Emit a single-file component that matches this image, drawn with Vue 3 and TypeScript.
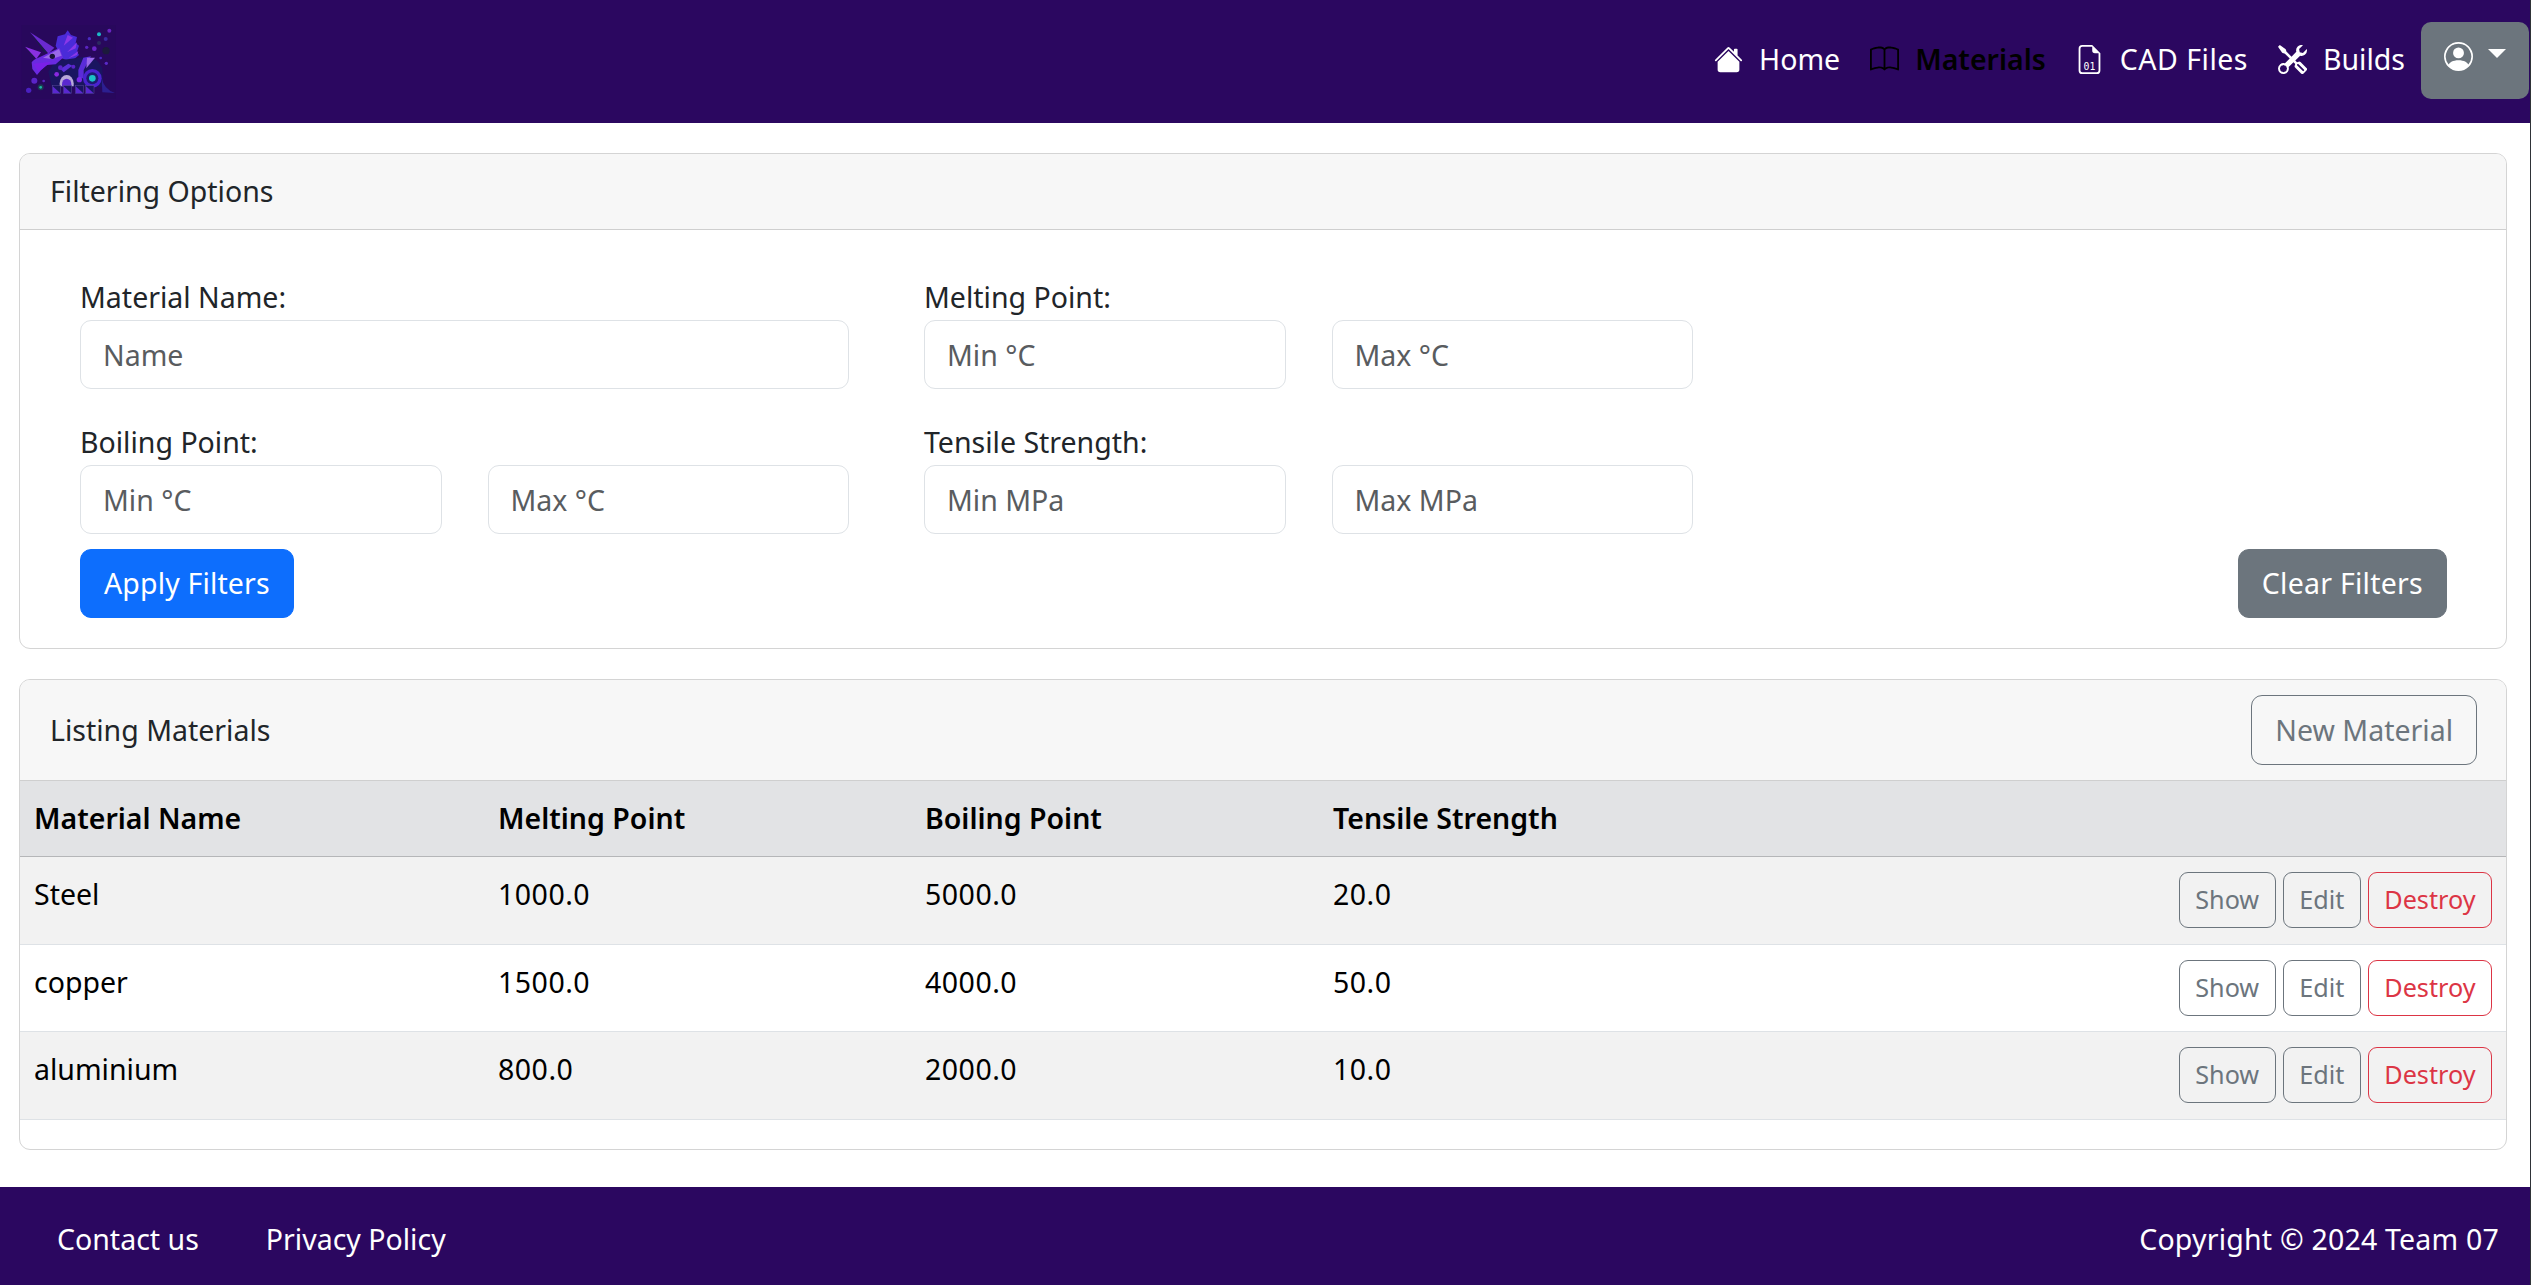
<script setup lang="ts">
interface Material { name: string; melting: string; boiling: string; tensile: string }
const materials: Material[] = [
  { name: 'Steel', melting: '1000.0', boiling: '5000.0', tensile: '20.0' },
  { name: 'copper', melting: '1500.0', boiling: '4000.0', tensile: '50.0' },
  { name: 'aluminium', melting: '800.0', boiling: '2000.0', tensile: '10.0' },
]
</script>

<template>
  <div class="page">
    <nav class="topbar">
      <svg class="logo" viewBox="0 0 330 270" width="110" height="90">
        <rect x="20" y="30" width="282" height="222" fill="#28085c" />
        <polygon points="45,52 118,98 100,116" fill="#6a2ad0" />
        <polygon points="45,52 100,116 86,110" fill="#1c1a4a" />
        <polygon points="30,95 78,112 64,132" fill="#8a30e0" />
        <polygon points="30,95 64,132 54,126" fill="#1c1a4a" />
        <path d="M122 92 L128 64 L150 58 L158 46 L168 60 L186 66 L182 84 L192 92 L186 110 L192 120 L168 140 L140 130 Z" fill="#4a2bd8" />
        <path d="M146 92 L158 60 L174 68 Z M156 112 L186 82 L182 100 Z M160 130 L190 108 L186 120 Z" fill="#8a38e8" />
        <path d="M100 170 L120 138 L190 128 Q245 118 262 160 L264 215 L110 215 Z" fill="#1a1560" />
        <path d="M190 165 L205 128 L228 124 L206 165 L206 190 L190 190 Z" fill="#5a2cd8" />
        <path d="M216 128 L240 128 L214 160 Z" fill="#9a68e8" />
        <path d="M136 162 L160 146 L172 152 L146 172 Z" fill="#5a2fd8" />
        <circle cx="175" cy="155" r="6" fill="#5a24c8" />
        <circle cx="136" cy="158" r="7" fill="#5a24c8" />
        <circle cx="125" cy="178" r="7" fill="#8a28e0" />
        <path d="M260 188 Q266 222 300 234 L262 232 Z" fill="#2c1f90" />
        <path d="M134 205 A21 25 0 0 1 176 205 L176 214 L134 214 Z" fill="#b8a8d8" />
        <path d="M141 208 A14 17 0 0 1 169 208 L169 214 L141 214 Z" fill="#5a28d0" />
        <circle cx="193" cy="194" r="8" fill="#7a28e8" />
        <circle cx="232" cy="190" r="28" fill="#4a22d0" />
        <circle cx="232" cy="190" r="18" fill="#1c1a70" />
        <circle cx="232" cy="190" r="10" fill="#1cc0c8" />
        <path d="M50 142 Q54 134 70 128 L134 98 L144 128 L122 148 L96 150 L78 166 L66 180 L52 162 Z" fill="#6a2ae0" />
        <path d="M84 128 L132 102 L140 122 L110 132 Z" fill="#9a68e8" />
        <path d="M54 146 L110 140 L96 150 L70 170 Z" fill="#7a20e8" />
        <circle cx="112" cy="124" r="8" fill="#1a1238" />
        <rect x="112" y="212" width="25" height="24" fill="#1a1560" stroke="#5a4a98" stroke-width="1.5" />
        <rect x="145" y="212" width="25" height="24" fill="#1a1560" stroke="#5a4a98" stroke-width="1.5" />
        <rect x="181" y="212" width="25" height="24" fill="#1a1560" stroke="#5a4a98" stroke-width="1.5" />
        <rect x="212" y="212" width="25" height="24" fill="#1a1560" stroke="#5a4a98" stroke-width="1.5" />
        <polygon points="113,235 136,235 113,214" fill="#5a28d0" />
        <polygon points="146,235 169,235 146,214" fill="#5a28d0" />
        <polygon points="182,235 205,235 182,214" fill="#5a28d0" />
        <polygon points="213,235 236,235 213,214" fill="#5a28d0" />
        <circle cx="252" cy="58" r="6" fill="#1cb8c8" />
        <circle cx="283" cy="47" r="6" fill="#6a24c0" />
        <circle cx="223" cy="71" r="5" fill="#4a2ac0" />
        <circle cx="272" cy="72" r="6" fill="#3a2aa0" />
        <circle cx="252" cy="84" r="6" fill="#2c2a60" />
        <circle cx="215" cy="97" r="5" fill="#5a24c0" />
        <circle cx="238" cy="101" r="7" fill="#6a24c8" />
        <circle cx="273" cy="107" r="11" fill="#1c1a3c" />
        <circle cx="257" cy="129" r="4" fill="#4a2ac0" />
        <circle cx="274" cy="145" r="5" fill="#5a2ac8" />
        <circle cx="58" cy="197" r="9" fill="#5a24c8" />
        <circle cx="86" cy="198" r="4" fill="#5a24c0" />
        <circle cx="77" cy="217" r="9" fill="#1c3a50" />
        <circle cx="77" cy="217" r="4" fill="#1cb8a8" />
        <circle cx="41" cy="226" r="8" fill="#4a20c0" />
      </svg>

      <div class="links">
        <a class="link home">
          <svg class="ico" viewBox="0 0 16 16" fill="currentColor"><path d="M8.707 1.5a1 1 0 0 0-1.414 0L.646 8.146a.5.5 0 0 0 .708.708L8 2.207l6.646 6.647a.5.5 0 0 0 .708-.708L13 5.793V2.5a.5.5 0 0 0-.5-.5h-1a.5.5 0 0 0-.5.5v1.293z"/><path d="m8 3.293 6 6V13.5a1.5 1.5 0 0 1-1.5 1.5h-9A1.5 1.5 0 0 1 2 13.5V9.293z"/></svg>
          <span>Home</span>
        </a>
        <a class="link active">
          <svg class="ico" viewBox="0 0 16 16" fill="currentColor"><path d="M1 2.828c.885-.37 2.154-.769 3.388-.893 1.33-.134 2.458.063 3.112.752v9.746c-.935-.53-2.12-.603-3.213-.493-1.18.12-2.37.461-3.287.811zm7.5-.141c.654-.689 1.782-.886 3.112-.752 1.234.124 2.503.523 3.388.893v9.923c-.918-.35-2.107-.692-3.287-.81-1.094-.111-2.278-.039-3.213.492zM8 1.783C7.015.936 5.587.81 4.287.94c-1.514.153-3.042.672-3.994 1.105A.5.5 0 0 0 0 2.5v11a.5.5 0 0 0 .707.455c.882-.4 2.303-.881 3.68-1.02 1.409-.142 2.59.087 3.223.877a.5.5 0 0 0 .78 0c.633-.79 1.814-1.019 3.222-.877 1.378.139 2.8.62 3.681 1.02A.5.5 0 0 0 16 13.5v-11a.5.5 0 0 0-.293-.455c-.952-.433-2.48-.952-3.994-1.105C10.413.809 8.985.936 8 1.783"/></svg>
          <span>Materials</span>
        </a>
        <a class="link">
          <svg class="ico" viewBox="0 0 16 16" fill="currentColor"><path d="M14 14V4.5L9.5 0H4a2 2 0 0 0-2 2v12a2 2 0 0 0 2 2h8a2 2 0 0 0 2-2M9.5 3A1.5 1.5 0 0 0 11 4.5h2V14a1 1 0 0 1-1 1H4a1 1 0 0 1-1-1V2a1 1 0 0 1 1-1h5.5z"/><text x="8" y="14" text-anchor="middle" font-size="5.4" font-family="'DejaVu Sans Mono', monospace" letter-spacing="0">01</text></svg>
          <span>CAD Files</span>
        </a>
        <a class="link">
          <svg class="ico" viewBox="0 0 16 16" fill="currentColor"><path d="M1 0 0 1l2.2 3.081a1 1 0 0 0 .815.419h.07a1 1 0 0 1 .708.293l2.675 2.675-2.617 2.654A3.003 3.003 0 0 0 0 13a3 3 0 1 0 5.878-.851l2.654-2.617.968.968-.305.914a1 1 0 0 0 .242 1.023l3.27 3.27a.997.997 0 0 0 1.414 0l1.586-1.586a.997.997 0 0 0 0-1.414l-3.27-3.27a1 1 0 0 0-1.023-.242L10.5 9.5l-.96-.96 2.68-2.643A3.005 3.005 0 0 0 16 3q0-.405-.102-.777l-2.14 2.141L12 4l-.364-1.757L13.777.102a3 3 0 0 0-3.675 3.68L7.462 6.46 4.793 3.793a1 1 0 0 1-.293-.707v-.071a1 1 0 0 0-.419-.814zm9.646 10.646a.5.5 0 0 1 .708 0l2.914 2.915a.5.5 0 0 1-.707.707l-2.915-2.914a.5.5 0 0 1 0-.708M3 11l.471.242.529.026.287.445.445.287.026.529L5 13l-.242.471-.026.529-.445.287-.287.445-.529.026L3 15l-.471-.242L2 14.732l-.287-.445L1.268 14l-.026-.529L1 13l.242-.471.026-.529.445-.287.287-.445.529-.026z"/></svg>
          <span>Builds</span>
        </a>
        <button class="user" type="button">
          <svg class="ico" viewBox="0 0 16 16" fill="currentColor"><path d="M11 6a3 3 0 1 1-6 0 3 3 0 0 1 6 0"/><path fill-rule="evenodd" d="M0 8a8 8 0 1 1 16 0A8 8 0 0 1 0 8m8-7a7 7 0 0 0-5.468 11.37C3.242 11.226 4.805 10 8 10s4.757 1.225 5.468 2.37A7 7 0 0 0 8 1"/></svg>
          <i class="caret"></i>
        </button>
      </div>
    </nav>

    <main class="content">
      <section class="card">
        <header class="card-head">Filtering Options</header>
        <div class="filter-body">
          <div class="filter-row">
            <div class="group">
              <label>Material Name:</label>
              <div class="one"><input placeholder="Name" /></div>
            </div>
            <div class="group">
              <label>Melting Point:</label>
              <div class="pair"><input placeholder="Min °C" /><input placeholder="Max °C" /></div>
            </div>
          </div>
          <div class="filter-row">
            <div class="group">
              <label>Boiling Point:</label>
              <div class="pair"><input placeholder="Min °C" /><input placeholder="Max °C" /></div>
            </div>
            <div class="group">
              <label>Tensile Strength:</label>
              <div class="pair"><input placeholder="Min MPa" /><input placeholder="Max MPa" /></div>
            </div>
          </div>
          <div class="actions">
            <button class="btn primary" type="button">Apply Filters</button>
            <button class="btn secondary" type="button">Clear Filters</button>
          </div>
        </div>
      </section>

      <section class="card listing">
        <header class="card-head split">
          <span>Listing Materials</span>
          <button class="btn outline" type="button">New Material</button>
        </header>
        <table>
          <colgroup>
            <col class="c1" /><col class="c2" /><col class="c3" /><col class="c4" /><col />
          </colgroup>
          <thead>
            <tr>
              <th>Material Name</th>
              <th>Melting Point</th>
              <th>Boiling Point</th>
              <th>Tensile Strength</th>
              <th></th>
            </tr>
          </thead>
          <tbody>
            <tr v-for="m in materials" :key="m.name">
              <td>{{ m.name }}</td>
              <td class="num">{{ m.melting }}</td>
              <td class="num">{{ m.boiling }}</td>
              <td class="num">{{ m.tensile }}</td>
              <td class="row-actions">
                <button class="mini" type="button">Show</button>
                <button class="mini" type="button">Edit</button>
                <button class="mini danger" type="button">Destroy</button>
              </td>
            </tr>
          </tbody>
        </table>
      </section>
    </main>

    <footer class="foot">
      <div class="foot-links">
        <a>Contact us</a>
        <a>Privacy Policy</a>
      </div>
      <span class="copy">Copyright © 2024 Team 07</span>
    </footer>
  </div>
</template>

<style>
html, body { background: #2f3338; }
body { margin: 0; }
</style>

<style scoped>
.page {
  width: 2530px;
  height: 1285px;
  background: #fff;
  color: #212529;
  font-family: "Noto Sans", "Open Sans", sans-serif;
  font-size: 28.5px;
  line-height: 43px;
  display: flex;
  flex-direction: column;
  overflow: hidden;
}
button, input { font: inherit; }

.topbar {
  height: 123px;
  flex: none;
  background: #2b0760;
  display: flex;
  align-items: flex-start;
  justify-content: space-between;
  padding-left: 15px;
}
.logo { margin-top: 15px; display: block; }
.links { display: flex; align-items: flex-start; padding-top: 22px; padding-right: 1px; }
.link {
  display: flex;
  align-items: center;
  color: #fff;
  height: 74px;
  gap: 16px;
  margin-right: 30px;
}
.ico { width: 29px; height: 29px; display: block; flex: none; }
.link.active { color: #000; font-weight: 600; margin-right: 29px; }
.link:nth-child(3) span { letter-spacing: 0.5px; }
.link:nth-child(4) { margin-right: 16px; }
.user {
  width: 108px;
  height: 77px;
  background: #6c757d;
  border: 0;
  border-radius: 10px;
  color: #fff;
  display: flex;
  align-items: flex-start;
  padding: 20px 0 0 23px;
  gap: 15px;
}
.caret {
  width: 0;
  height: 0;
  margin-top: 7px;
  border-left: 9px solid transparent;
  border-right: 9px solid transparent;
  border-top: 9px solid #fff;
}

.content { flex: 1; padding: 30px 23px 0 19px; }
.card {
  border: 1px solid #d4d4d4;
  border-radius: 11px;
  overflow: hidden;
  background: #fff;
}
.listing { margin-top: 30px; padding-bottom: 29px; }
.card-head {
  background: #f7f7f7;
  border-bottom: 1px solid #cfcfcf;
  padding: 16px 30px;
}
.card-head.split {
  display: flex;
  justify-content: space-between;
  align-items: center;
  padding: 15px 29px 15px 30px;
}

.filter-body {
  padding: 49px 59px 30px 60px;
  display: flex;
  flex-direction: column;
}
.filter-row {
  display: grid;
  grid-template-columns: 769px 769px;
  column-gap: 75px;
  margin-bottom: 35px;
}
.filter-row:nth-child(2) { margin-bottom: 15px; }
.group label { display: block; height: 41px; line-height: 37px; }
.filter-row:nth-child(2) .group label { line-height: 36px; }
.one, .pair { display: grid; }
.pair { grid-template-columns: 1fr 1fr; column-gap: 46px; }
input {
  box-sizing: border-box;
  width: 100%;
  height: 69px;
  padding: 0 22px;
  color: #212529;
  background: #fff;
  border: 1px solid #dee2e6;
  border-radius: 11px;
  outline: none;
}
input::placeholder { color: #595c5f; opacity: 1; }

.actions { display: flex; justify-content: space-between; }
.btn {
  box-sizing: border-box;
  height: 69px;
  padding: 0 23px;
  border-radius: 11px;
  border: 1px solid transparent;
  white-space: nowrap;
}
.primary { background: #0d6efd; border-color: #0d6efd; color: #fff; letter-spacing: 0.15px; }
.secondary { background: #6c757d; border-color: #6c757d; color: #fff; letter-spacing: 0.25px; }
.outline { background: transparent; border-color: #6c757d; color: #6c757d; height: 70px; }

table {
  width: 100%;
  border-collapse: collapse;
  table-layout: fixed;
  color: #000;
}
.c1 { width: 464px; }
.c2 { width: 427px; }
.c3 { width: 408px; }
.c4 { width: 500px; }
th {
  text-align: left;
  font-weight: 600;
  background: #e2e3e5;
  height: 75px;
  padding: 0 14px;
  border-bottom: 1px solid #b5b6b8;
}
td {
  padding: 16px 14px 0;
  height: 87px;
  box-sizing: border-box;
  vertical-align: top;
  border-bottom: 1px solid #dee2e6;
}
td.num { letter-spacing: 0.5px; }
tbody tr:nth-child(odd) td { height: 88px; background: #f2f2f2; }
.row-actions {
  padding: 15px 14px 0 0;
  text-align: right;
  white-space: nowrap;
  font-size: 0;
}
.mini {
  box-sizing: border-box;
  height: 56px;
  padding: 0 15.5px;
  margin-left: 7px;
  font-size: 25.2px;
  line-height: 1;
  background: transparent;
  color: #6c757d;
  border: 1px solid #6c757d;
  border-radius: 9px;
  vertical-align: top;
}
.mini.danger { color: #dc3545; border-color: #dc3545; }

.foot {
  height: 98px;
  flex: none;
  background: #2b0760;
  color: #fff;
  display: flex;
  align-items: center;
  justify-content: space-between;
  padding: 6px 31px 0 57px;
  box-sizing: border-box;
}
.foot-links { display: flex; gap: 67px; }
.copy { letter-spacing: 0.2px; }
</style>
